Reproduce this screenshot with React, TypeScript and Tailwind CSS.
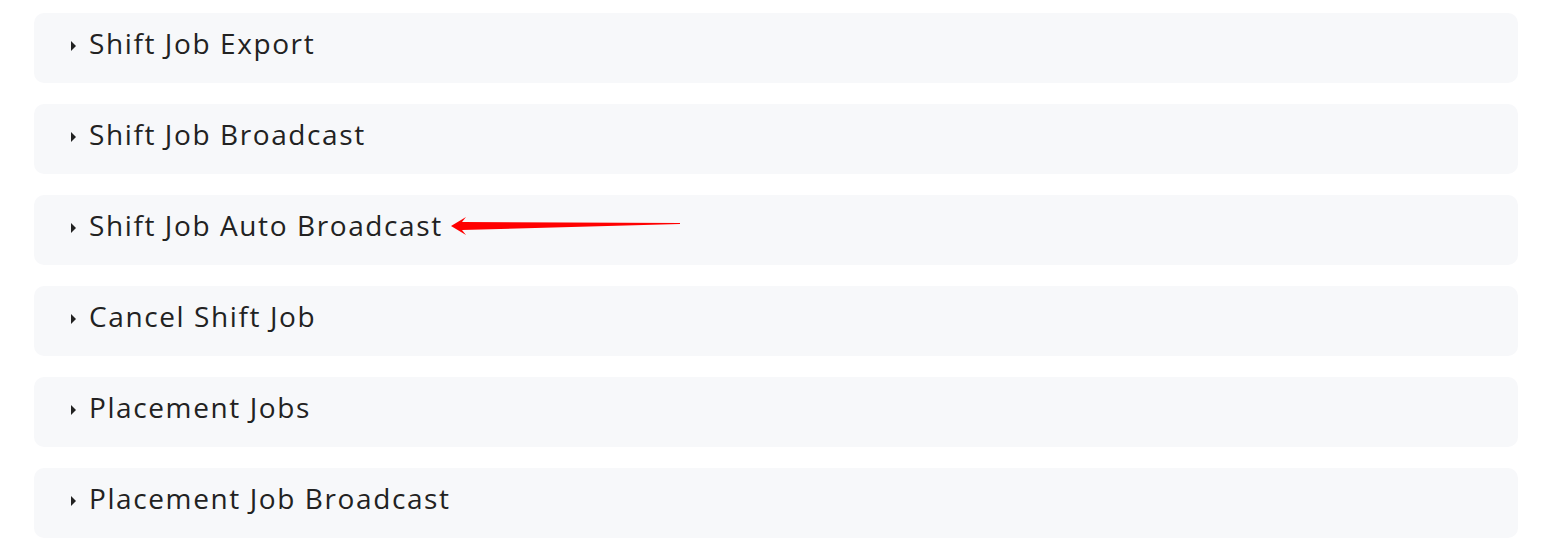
const items = [
  'Shift Job Export',
  'Shift Job Broadcast',
  'Shift Job Auto Broadcast',
  'Cancel Shift Job',
  'Placement Jobs',
  'Placement Job Broadcast',
];

const RedArrow = () => (
  <svg width="231" height="20" viewBox="0 0 231 20" className="ml-[8px] mt-[2px]">
    <path d="M0 10 L15 1 L11 6 L229 7 L229 8 L11 14 L15 19 Z" fill="#ff0000" />
  </svg>
);

export default function App() {
  return (
    <div className="min-h-screen bg-white pl-[34px] pt-[13px]" style={{ fontFamily: '"Open Sans", sans-serif' }}>
      <div className="flex w-[1484px] flex-col gap-[21px]">
        {items.map((label, i) => (
          <div key={label} className="flex h-[70px] items-center rounded-[10px] bg-[#f7f8fa] pl-[37px] pb-[10px]">
            <span className="mr-[13px] mt-[6px] inline-block h-0 w-0 border-y-[5px] border-l-[5px] border-y-transparent border-l-[#222]" />
            <span className="text-[28px] tracking-[1.6px] text-[#222]">{label}</span>
            {i === 2 && <RedArrow />}
          </div>
        ))}
      </div>
    </div>
  );
}
